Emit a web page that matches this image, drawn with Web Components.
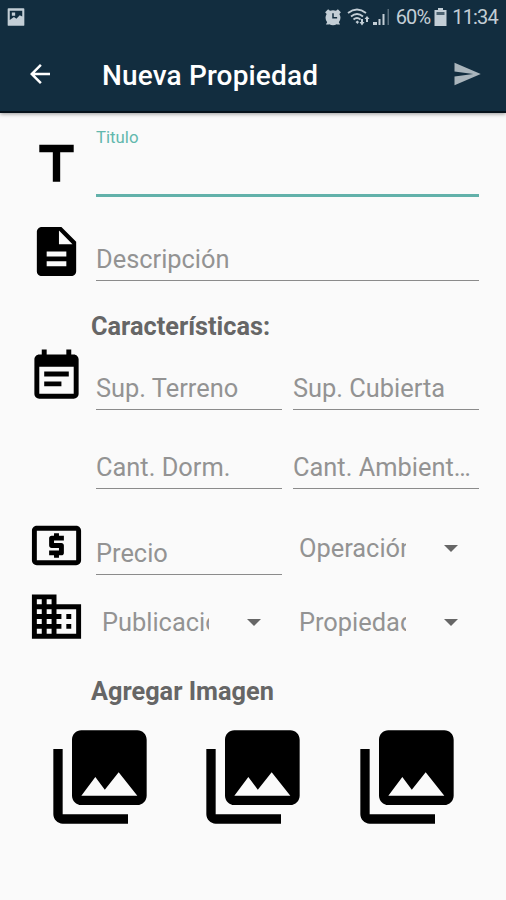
<!DOCTYPE html>
<html lang="es">
<head>
<meta charset="utf-8">
<title>Nueva Propiedad</title>
<style>
body {
    margin: 0;
    background: #fafafa;
    font-family: Roboto, "Liberation Sans", sans-serif;
}
</style>
</head>
<body>
<property-page></property-page>

<script>
const ICONS = {
    title: 'M5 4v3h5.5v12h3V7H19V4z',
    description: 'M14 2H6c-1.1 0-1.99.9-1.99 2L4 20c0 1.1.89 2 1.99 2H18c1.1 0 2-.9 2-2V8l-6-6zm2 16H8v-2h8v2zm0-4H8v-2h8v2zm-3-5V3.5L18.5 9H13z',
    note: 'M17 10H7v2h10v-2zm2-7h-1V1h-2v2H8V1H6v2H5c-1.11 0-1.99.9-1.99 2L3 19c0 1.1.89 2 2 2h14c1.1 0 2-.9 2-2V5c0-1.1-.9-2-2-2zm0 16H5V8h14v11zm-5-5H7v2h7v-2z',
    atm: 'M11 17h2v-1h1c.55 0 1-.45 1-1v-3c0-.55-.45-1-1-1h-3v-1h4V8h-2V7h-2v1h-1c-.55 0-1 .45-1 1v3c0 .55.45 1 1 1h3v1H9v2h2v1zm9-13H4c-1.11 0-1.99.89-1.99 2L2 18c0 1.11.89 2 2 2h16c1.11 0 2-.89 2-2V6c0-1.11-.89-2-2-2zm0 14H4V6h16v12z',
    business: 'M12 7V3H2v18h20V7H12zM6 19H4v-2h2v2zm0-4H4v-2h2v2zm0-4H4V9h2v2zm0-4H4V5h2v2zm4 12H8v-2h2v2zm0-4H8v-2h2v2zm0-4H8V9h2v2zm0-4H8V5h2v2zm10 12h-8v-2h2v-2h-2v-2h2v-2h-2V9h8v10zm-2-8h-2v2h2v-2zm0 4h-2v2h2v-2z',
    library: 'M22 16V4c0-1.1-.9-2-2-2H8c-1.1 0-2 .9-2 2v12c0 1.1.9 2 2 2h12c1.1 0 2-.9 2-2zm-11-4l2.03 2.71L16 11l4 5H8l3-4zM2 6v14c0 1.1.9 2 2 2h14v-2H4V6H2z',
    back: 'M20 11H7.83l5.59-5.59L12 4l-8 8 8 8 1.41-1.41L7.83 13H20v-2z',
    send: 'M2.01 21L23 12 2.01 3 2 10l15 2-15 2z',
    picture: 'M3 1.5h18a1 1 0 0 1 1 1v19a1 1 0 0 1-1 1H3a1 1 0 0 1-1-1v-19a1 1 0 0 1 1-1zM4.5 4.5v11l5-3.5 3 2 4-4 3 1.5v-7zM7 6.5h4v4H7z',
    alarm: 'M12 3a10 10 0 0 1 4 .8L18.5 1.5 22.5 5.5 20.5 8A10 10 0 0 1 19.8 19L21.5 22H18L17 21.5A10 10 0 0 1 7 21.5L6 22H2.5L4.2 19A10 10 0 0 1 3.5 8L1.5 5.5 5.5 1.5 8 3.8A10 10 0 0 1 12 3zM11 7v7h6.5v-2H13V7z',
};

// <app-icon name size>: un icono de 24x24 escalado
class AppIcon extends HTMLElement {
    constructor() {
        super();
        this.attachShadow({ mode: "open" });
    }

    connectedCallback() {
        const size = this.getAttribute('size') || 59;
        this.shadowRoot.innerHTML = `
        <style>
            :host { display: block; flex: none; width: ${size}px; height: ${size}px; }
            svg { display: block; width: 100%; height: 100%; fill: currentColor; fill-rule: evenodd; }
        </style>
        <svg viewBox="0 0 24 24"><path d="${ICONS[this.getAttribute('name')]}"/></svg>`;
    }
}
window.customElements.define("app-icon", AppIcon);

class StatusBar extends HTMLElement {
    constructor() {
        super();
        this.attachShadow({ mode: "open" });
        this.shadowRoot.innerHTML = `
        <style>
            :host {
                display: flex;
                align-items: center;
                height: 34px;
                padding: 0 8px 0 6px;
                color: #c3ced6;
                font-size: 20px;
            }
            .space { flex: 1; }
            svg { display: block; fill: currentColor; }
            .wifi { margin-left: 5px; }
            .signal { margin-left: 3px; }
            .percent { margin-left: 6px; letter-spacing: -.9px; }
            .battery { margin-left: 4px; }
            .clock { margin-left: 5px; letter-spacing: -.8px; }
        </style>
        <app-icon name="picture" size="20"></app-icon>
        <span class="space"></span>
        <app-icon name="alarm" size="18"></app-icon>
        <svg class="wifi" width="23" height="20" viewBox="0 0 23 20">
            <g fill="none" stroke="currentColor" stroke-width="1.8">
                <path d="M1 6Q10 -1 19 6"/>
                <path d="M4 9.5Q10 4.5 16 9.5"/>
                <path d="M6.5 12.5Q10 9.5 13.5 12.5"/>
            </g>
            <path d="M8.5 15l2-1.5 1.5 1.5-1.5 2zM14 12h2v3h1.5l-2.5 3.5-2.5-3.5h1.5zM19 15v-3h-1.5l2.5-3 2.5 3h-1.5v3z"/>
        </svg>
        <svg class="signal" width="17" height="18" viewBox="0 0 17 18">
            <path d="M0 14h4v3H0zM5.5 11h2v6h-2zM9.5 6h2v11h-2z"/>
            <path d="M14.5 1h1.5v16h-1.5z" opacity=".4"/>
        </svg>
        <span class="percent">60%</span>
        <svg class="battery" width="13" height="18" viewBox="0 0 13 18">
            <path d="M4 0h5v2h3.5v16H.5V2H4z"/>
            <path d="M2.5 4h8v3h-8z" fill="#4c6270"/>
        </svg>
        <span class="clock">11:34</span>`;
    }
}
window.customElements.define("status-bar", StatusBar);

class AppToolbar extends HTMLElement {
    constructor() {
        super();
        this.attachShadow({ mode: "open" });
        this.shadowRoot.innerHTML = `
        <style>
            :host {
                display: block;
                height: 113px;
                box-sizing: border-box;
                background: #122d3f;
                border-bottom: 2px solid #06121b;
                box-shadow: 0 1px 4px rgba(0, 0, 0, .4);
            }
            .bar {
                display: flex;
                align-items: center;
                height: 80px;
                padding: 0 24px 0 25px;
                color: #fff;
            }
            h1 {
                flex: 1;
                margin: 2px 0 0 47px;
                font-size: 28px;
                font-weight: 500;
                letter-spacing: .15px;
            }
            .send { color: #aab5bc; }
        </style>
        <status-bar></status-bar>
        <div class="bar">
            <app-icon name="back" size="30"></app-icon>
            <h1><slot></slot></h1>
            <app-icon class="send" name="send" size="30"></app-icon>
        </div>`;
    }
}
window.customElements.define("app-toolbar", AppToolbar);

// fila con icono a la izquierda y campos a la derecha
class FormRow extends HTMLElement {
    constructor() {
        super();
        this.attachShadow({ mode: "open" });
    }

    connectedCallback() {
        const icon = this.getAttribute('icon');
        this.shadowRoot.innerHTML = `
        <style>
            :host {
                display: grid;
                grid-template-columns: 59px 1fr;
                column-gap: 10px;
                padding: 0 27.5px 0 27px;
            }
            .icon { padding-top: var(--icon-top, 0); }
            .fields { display: grid; grid-auto-flow: column; grid-auto-columns: minmax(0, 1fr); column-gap: 11.5px; align-items: end; }
        </style>
        <div class="icon">${icon ? `<app-icon name="${icon}"></app-icon>` : ''}</div>
        <div class="fields"><slot></slot></div>`;
    }
}
window.customElements.define("form-row", FormRow);

class TextField extends HTMLElement {
    constructor() {
        super();
        this.attachShadow({ mode: "open" });
        this.shadowRoot.innerHTML = `
        <style>
            :host {
                display: flex;
                align-items: flex-end;
                height: 42px;
                box-sizing: border-box;
                border-bottom: 1.5px solid #8b8b8b;
                color: #939393;
                font-size: 25.4px;
            }
            span {
                flex: 1;
                padding-bottom: 6px;
                line-height: 30px;
                overflow: hidden;
                white-space: nowrap;
                text-overflow: ellipsis;
            }
            :host([active]) {
                align-items: flex-start;
                height: 72px;
                border-bottom: 3px solid #62b1aa;
                color: #62b8ad;
                font-size: 16.8px;
            }
            :host([active]) span { line-height: 25px; }
        </style>
        <span><slot></slot></span>`;
    }
}
window.customElements.define("text-field", TextField);

class SelectField extends HTMLElement {
    constructor() {
        super();
        this.attachShadow({ mode: "open" });
        this.shadowRoot.innerHTML = `
        <style>
            :host {
                display: flex;
                align-items: center;
                justify-content: space-between;
                height: 40px;
                padding: 0 21px 0 6px;
                color: #939393;
                font-size: 25.4px;
            }
            span {
                width: 106.5px;
                line-height: 30px;
                overflow: hidden;
                white-space: nowrap;
            }
            i {
                border: 7px solid transparent;
                border-top-color: #666;
                border-bottom: 0;
            }
        </style>
        <span><slot></slot></span>
        <i></i>`;
    }
}
window.customElements.define("select-field", SelectField);

class SectionTitle extends HTMLElement {
    constructor() {
        super();
        this.attachShadow({ mode: "open" });
        this.shadowRoot.innerHTML = `
        <style>
            :host { display: block; padding-left: 91px; }
            h2 { margin: 0; color: #666; font-size: 25.3px; font-weight: 700; line-height: 30px; }
        </style>
        <h2><slot></slot></h2>`;
    }
}
window.customElements.define("section-title", SectionTitle);

class PropertyPage extends HTMLElement {
    constructor() {
        super();
        this.attachShadow({ mode: "open" });
        this.shadowRoot.innerHTML = `
        <style>
            :host { display: block; height: 900px; overflow: hidden; }
            .titulo { margin-top: 12px; --icon-top: 10px; }
            .descripcion { margin-top: 25px; }
            .caracteristicas { margin-top: 31px; }
            .superficie { margin-top: 5px; min-height: 63px; }
            .cantidad { margin-top: 37px; }
            .precio { margin-top: 27px; }
            .precio select-field { margin-bottom: 7px; }
            .publicacion { margin-top: 12px; }
            .publicacion select-field { margin-bottom: 4px; }
            .imagenes { margin-top: 31px; }
            .gallery { display: flex; justify-content: space-between; padding: 14px 43px 0 43.5px; color: #000; }
        </style>
        <app-toolbar>Nueva Propiedad</app-toolbar>
        <form-row class="titulo" icon="title">
            <text-field active>Titulo</text-field>
        </form-row>
        <form-row class="descripcion" icon="description">
            <text-field>Descripción</text-field>
        </form-row>
        <section-title class="caracteristicas">Características:</section-title>
        <form-row class="superficie" icon="note">
            <text-field>Sup. Terreno</text-field>
            <text-field>Sup. Cubierta</text-field>
        </form-row>
        <form-row class="cantidad">
            <text-field>Cant. Dorm.</text-field>
            <text-field>Cant. Ambientes</text-field>
        </form-row>
        <form-row class="precio" icon="atm">
            <text-field>Precio</text-field>
            <select-field>Operación</select-field>
        </form-row>
        <form-row class="publicacion" icon="business">
            <select-field>Publicación</select-field>
            <select-field>Propiedad</select-field>
        </form-row>
        <section-title class="imagenes">Agregar Imagen</section-title>
        <div class="gallery">
            <app-icon name="library" size="112"></app-icon>
            <app-icon name="library" size="112"></app-icon>
            <app-icon name="library" size="112"></app-icon>
        </div>`;
    }
}
window.customElements.define("property-page", PropertyPage);
</script>
</body>
</html>
